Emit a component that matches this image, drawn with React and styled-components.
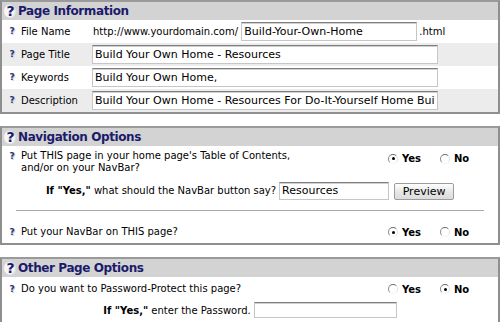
import React from 'react';
import styled, { createGlobalStyle } from 'styled-components';

const GlobalStyle = createGlobalStyle`
    html, body {
        margin: 0;
        padding: 0;
        background: #fff;
    }
    body {
        font-family: "DejaVu Sans", Verdana, sans-serif;
        font-size: 10px;
        color: #000;
    }
`;

const Page = styled.div`
    display: flex;
    flex-direction: column;
    gap: 12px;
    width: 500px;
`;

const Panel = styled.section`
    border: 2px solid #8f8f8f;
    border-top-color: #9a9a9a;
    background: #fff;
`;

const PanelHeader = styled.header`
    display: flex;
    align-items: center;
    gap: 1px;
    height: 18px;
    padding-left: 2px;
    background: #d3d3d3;
`;

const PanelTitle = styled.h2`
    margin: 0;
    font-size: 12px;
    font-weight: bold;
    letter-spacing: -0.4px;
    color: #1b1b6c;
`;

const HelpMark = styled.span`
    display: inline-flex;
    justify-content: center;
    align-items: center;
    flex: none;
    width: ${(p) => (p.$big ? 13 : 8)}px;
    height: ${(p) => (p.$big ? 14 : 10)}px;
    border-radius: 50%;
    background: ${(p) =>
        p.$big ? 'radial-gradient(circle at 35% 55%, #f6f6f6 0 45%, transparent 70%)' : 'none'};
    font-size: ${(p) => (p.$big ? 14 : 9)}px;
    font-weight: bold;
    line-height: 1;
    color: ${(p) => (p.$big ? '#1b1b6c' : '#2e3370')};
    text-shadow: ${(p) => (p.$big ? 'none' : '1px 1px 0 #c9cbe0')};
`;

const HelpIcon = ({ big }) => <HelpMark $big={big}>?</HelpMark>;

// page information rows
const FieldRow = styled.div`
    display: grid;
    grid-template-columns: 89px 1fr;
    align-items: center;
    height: 23px;
    background: ${(p) => (p.$shaded ? '#ececec' : '#fff')};
`;

const FieldLabel = styled.div`
    display: flex;
    align-items: center;
    gap: 5px;
    padding-left: 6px;
`;

const FieldValue = styled.div`
    display: flex;
    align-items: center;
    padding-left: ${(p) => p.$pad || 0}px;
`;

const TextInput = styled.input`
    box-sizing: border-box;
    width: ${(p) => p.$width}px;
    height: ${(p) => p.$height || 19}px;
    margin: 0;
    padding: 0 2px;
    border: 1px solid #c6c6c6;
    border-top: 1px solid #7e7e7e;
    box-shadow: inset 0 1px 0 #d0d0d0;
    background: #fff;
    font-family: "DejaVu Sans", Verdana, sans-serif;
    font-size: 11px;
    color: #000;
    outline: none;
`;

const Suffix = styled.span`
    margin-left: 2px;
`;

// question rows
const QuestionRow = styled.div`
    display: flex;
    align-items: ${(p) => (p.$top ? 'flex-start' : 'center')};
    padding: ${(p) => p.$pad};
`;

const Question = styled.div`
    display: flex;
    align-items: flex-start;
    gap: 5px;
    padding-left: 6px;
    line-height: 12px;

    ${HelpMark} {
        margin-top: 1px;
    }
`;

const RadioGroup = styled.div`
    display: flex;
    margin-left: auto;
    width: 110px;
    padding-top: ${(p) => p.$offset || 0}px;
`;

const RadioOption = styled.label`
    display: flex;
    align-items: center;
    gap: 4px;
    width: 52px;
    font-size: 10px;
    font-weight: bold;
`;

const RadioDot = styled.span`
    position: relative;
    box-sizing: border-box;
    width: 10px;
    height: 10px;
    border-radius: 50%;
    border: 1px solid;
    border-color: #6f6f6f #e2e2e2 #f2f2f2 #8a8a8a;
    background: #fff;

    &::after {
        content: '';
        position: absolute;
        left: 2.5px;
        top: 2.5px;
        width: 3px;
        height: 3px;
        border-radius: 50%;
        background: ${(p) => (p.$checked ? '#000' : 'transparent')};
    }
`;

const YesNo = ({ yes, offset }) => (
    <RadioGroup $offset={offset}>
        <RadioOption>
            <RadioDot $checked={yes} />
            Yes
        </RadioOption>
        <RadioOption>
            <RadioDot $checked={!yes} />
            No
        </RadioOption>
    </RadioGroup>
);

const FollowUp = styled.div`
    display: flex;
    justify-content: center;
    align-items: center;
    gap: 3px;
    padding: ${(p) => p.$pad};
`;

const Strong = styled.b`
    font-weight: bold;
`;

const PreviewButton = styled.button`
    box-sizing: border-box;
    width: 60px;
    height: 17px;
    margin: 2px 0 0 2px;
    padding: 0;
    border: 1px solid #9c9c9c;
    border-radius: 2px;
    background: linear-gradient(#ffffff, #e6e6e6 55%, #dcdcdc);
    font-family: "DejaVu Sans", Verdana, sans-serif;
    font-size: 11px;
    color: #000;
`;

const Divider = styled.hr`
    margin: 0 14px;
    height: 0;
    border: 0;
    border-top: 1px solid #a8a8a8;
`;

export default function App() {
    return (
        <>
            <GlobalStyle />
            <Page>
                <Panel>
                    <PanelHeader>
                        <HelpIcon big />
                        <PanelTitle>Page Information</PanelTitle>
                    </PanelHeader>
                    <FieldRow>
                        <FieldLabel>
                            <HelpIcon />
                            File Name
                        </FieldLabel>
                        <FieldValue $pad={2}>
                            <span>http://www.yourdomain.com/&nbsp;</span>
                            <TextInput $width={176} defaultValue="Build-Your-Own-Home" />
                            <Suffix>.html</Suffix>
                        </FieldValue>
                    </FieldRow>
                    <FieldRow $shaded>
                        <FieldLabel>
                            <HelpIcon />
                            Page Title
                        </FieldLabel>
                        <FieldValue $pad={1}>
                            <TextInput $width={346} defaultValue="Build Your Own Home - Resources" />
                        </FieldValue>
                    </FieldRow>
                    <FieldRow>
                        <FieldLabel>
                            <HelpIcon />
                            Keywords
                        </FieldLabel>
                        <FieldValue $pad={1}>
                            <TextInput $width={346} defaultValue="Build Your Own Home," />
                        </FieldValue>
                    </FieldRow>
                    <FieldRow $shaded>
                        <FieldLabel>
                            <HelpIcon />
                            Description
                        </FieldLabel>
                        <FieldValue $pad={1}>
                            <TextInput
                                $width={346}
                                defaultValue="Build Your Own Home - Resources For Do-It-Yourself Home Builders"
                            />
                        </FieldValue>
                    </FieldRow>
                </Panel>

                <Panel>
                    <PanelHeader>
                        <HelpIcon big />
                        <PanelTitle>Navigation Options</PanelTitle>
                    </PanelHeader>
                    <QuestionRow $top $pad="4px 0 0">
                        <Question>
                            <HelpIcon />
                            <span>
                                Put THIS page in your home page's Table of Contents,
                                <br />
                                and/or on your NavBar?
                            </span>
                        </Question>
                        <YesNo yes offset={3} />
                    </QuestionRow>
                    <FollowUp $pad="7px 0 10px">
                        <span>
                            <Strong>If "Yes,"</Strong> what should the NavBar button say?
                        </span>
                        <TextInput $width={110} $height={18} defaultValue="Resources" />
                        <PreviewButton>Preview</PreviewButton>
                    </FollowUp>
                    <Divider />
                    <QuestionRow $pad="15px 0 5px">
                        <Question>
                            <HelpIcon />
                            <span>Put your NavBar on THIS page?</span>
                        </Question>
                        <YesNo yes />
                    </QuestionRow>
                </Panel>

                <Panel>
                    <PanelHeader>
                        <HelpIcon big />
                        <PanelTitle>Other Page Options</PanelTitle>
                    </PanelHeader>
                    <QuestionRow $pad="6px 0 0">
                        <Question>
                            <HelpIcon />
                            <span>Do you want to Password-Protect this page?</span>
                        </Question>
                        <YesNo yes={false} />
                    </QuestionRow>
                    <FollowUp $pad="7px 0 4px">
                        <span>
                            <Strong>If "Yes,"</Strong> enter the Password.
                        </span>
                        <TextInput $width={143} $height={16} />
                    </FollowUp>
                </Panel>
            </Page>
        </>
    );
}
